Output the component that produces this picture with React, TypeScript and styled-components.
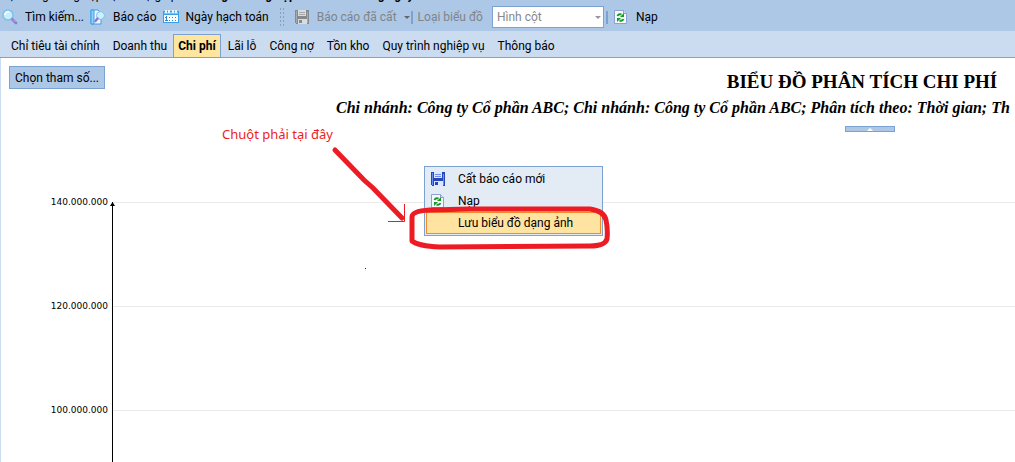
import React from "react";
import styled, { createGlobalStyle } from "styled-components";

const edge = "#7ba2d0";
const bar = "#adc7e6";
const pale = "#cbdbf0";
const red = "#ed1c24";

const Global = createGlobalStyle`
  *, *::before, *::after { box-sizing: border-box; }
  body { margin: 0; background: #fff; color: #000; font: 12px/16px Roboto, sans-serif; }
  button, select { font: inherit; color: inherit; margin: 0; }
`;

const Page = styled.div`
  position: relative;
  display: flex;
  flex-direction: column;
  height: 100vh;
  overflow: hidden;
`;

const MenuStrip = styled.nav`
  display: flex;
  align-items: flex-end;
  gap: 16px;
  height: 3px;
  overflow: hidden;
  background: ${bar};
  white-space: nowrap;
`;

const MenuTitle = styled.span<{ $strong?: boolean }>`
  flex: none;
  font-weight: ${p => (p.$strong ? 700 : 400)};
`;

const Toolbar = styled.div`
  display: flex;
  align-items: center;
  flex: none;
  height: 28px;
  padding-left: 2px;
  background: ${bar};
  white-space: nowrap;
`;

const ToolButton = styled.button<{ $tight?: boolean }>`
  display: flex;
  align-items: center;
  flex: none;
  gap: 7px;
  padding: 0 ${p => (p.$tight ? 1 : 6)}px 0 0;
  border: 0;
  background: none;
  &:disabled { color: #808488; }
`;

const Grip = styled.span`
  width: 6px;
  height: 21px;
  margin: 0 9px 0 4px;
  background: radial-gradient(circle, #8e9fb5 1px, transparent 1px) 0 0 / 3px 4px;
`;

const Divider = styled.span`
  width: 2px;
  height: 13px;
  margin-right: 5px;
  background: ${edge};
`;

const FieldLabel = styled.label`
  margin-right: 9px;
  color: #808488;
`;

const SelectBox = styled.span`
  position: relative;
  flex: none;
  width: 112px;
  margin-right: 2px;
  svg { position: absolute; right: 3px; top: 10px; }
`;

const Select = styled.select`
  display: block;
  appearance: none;
  width: 100%;
  height: 22px;
  padding: 0 4px;
  border: 1px solid ${edge};
  border-radius: 0;
  background: #fff;
  opacity: 1;
  &:disabled { color: #85888c; }
`;

const Tabs = styled.div`
  display: flex;
  align-items: flex-end;
  flex: none;
  height: 27px;
  padding-left: 4px;
  border-bottom: 1px solid ${edge};
  background: ${pale};
  white-space: nowrap;
`;

const Tab = styled.button<{ $active?: boolean }>`
  flex: none;
  height: 23px;
  padding: ${p => (p.$active ? "0 4px" : "0 6px 0 7px")};
  border: ${p => (p.$active ? `1px solid ${edge}` : "0")};
  border-bottom: 0;
  background: ${p => (p.$active ? "#ffe6a0" : "none")};
  font-weight: ${p => (p.$active ? 700 : 400)};
`;

const Content = styled.main`
  display: flex;
  flex-direction: column;
  flex: 1;
  min-height: 0;
  border-left: 1px solid ${pale};
`;

const Header = styled.header`
  display: grid;
  grid-template-columns: 335px 1fr;
  flex: none;
  height: 144px;
  padding-top: 8px;
  overflow: hidden;
`;

const ParamButton = styled.button`
  justify-self: start;
  align-self: start;
  height: 23px;
  margin-left: 8px;
  width: 96px;
  padding: 0;
  border: 1px solid ${edge};
  background: ${bar};
  white-space: nowrap;
`;

const Headings = styled.div`
  display: flex;
  flex-direction: column;
  width: 1068px;
  font-family: "Liberation Serif", serif;
  white-space: nowrap;
`;

const Title = styled.h1`
  margin: 4px 16px 0 0;
  text-align: center;
  font-size: 19px;
  line-height: 24px;
`;

const Subtitle = styled.h2`
  margin: 2px 0 6px;
  font-size: 16px;
  font-style: italic;
  line-height: 24px;
`;

const Collapse = styled.button`
  display: flex;
  align-items: center;
  justify-content: center;
  align-self: center;
  width: 50px;
  height: 6px;
  padding: 0;
  border: 1px solid ${edge};
  background: ${bar};
`;

const Chart = styled.section`
  display: grid;
  grid-template-columns: 107px 4px 1fr;
  flex: 1;
  min-height: 0;
`;

const Scale = styled.div`
  margin-top: -7px;
  text-align: right;
  font: 9px/14px "DejaVu Sans", sans-serif;
`;

const Tick = styled.div`
  height: 104px;
`;

const Plot = styled.div`
  grid-column: 3;
  border-left: 1px solid #000;
  overflow: hidden;
`;

const GridRow = styled.div`
  height: 104px;
  border-top: 1px solid #ebebeb;
`;

const ContextMenu = styled.div`
  position: absolute;
  left: 424px;
  top: 166px;
  width: 179px;
  padding: 1px;
  border: 1px solid ${edge};
  background: #e3ebf5;
`;

const MenuItem = styled.button<{ $active?: boolean }>`
  display: grid;
  grid-template-columns: 28px 1fr;
  align-items: center;
  width: 100%;
  height: 22px;
  padding: 0 3px;
  border: 1px solid ${p => (p.$active ? "#f58a2c" : "transparent")};
  background: ${p => (p.$active ? "#ffe3a0" : "none")};
  text-align: left;
  white-space: nowrap;
`;

const Note = styled.p`
  position: absolute;
  left: 222px;
  top: 125px;
  margin: 0;
  color: ${red};
  font: 13px/18px "Noto Sans", sans-serif;
  white-space: nowrap;
`;

const Marks = styled.svg`
  position: absolute;
  left: 0;
  top: 0;
  pointer-events: none;
`;

const SearchIcon = () => (
  <svg width="16" height="16" viewBox="0 0 16 16">
    <circle cx="6" cy="6" r="5" fill="#c9eefb" stroke="#79bfe9" strokeWidth="1.4" />
    <path d="M3 6a3 3 0 0 1 4-3" fill="none" stroke="#fff" strokeWidth="1.5" />
    <path d="M10.500 10.500l3.500 3.500" stroke="#8f76d0" strokeWidth="2.600" strokeLinecap="round" />
    <path d="M11 10.500l2.500 2.500" stroke="#c4b5ed" strokeWidth="1" />
  </svg>
);

const ReportIcon = () => (
  <svg width="16" height="16" viewBox="0 0 16 16">
    <path d="M1 1h7l3 3v11H1z" fill="#e9f7ff" stroke="#3f9fe8" />
    <path d="M1 1h3v14H1z" fill="#8fd0fa" stroke="#3f9fe8" />
    <circle cx="10.500" cy="6.500" r="4" fill="#cdeffc" stroke="#79bfe9" />
    <path d="M7.500 9.500l-2 2.500" stroke="#8f76d0" strokeWidth="2.400" strokeLinecap="round" />
  </svg>
);

const CalendarIcon = () => (
  <svg width="16" height="16" viewBox="0 0 16 16" shapeRendering="crispEdges">
    <path d="M0 2h16v12H0z" fill="#3b9fe6" />
    <path d="M1 6h14v7H1z" fill="#f3fbff" />
    <path d="M1 3h14v2H1z" fill="#7cc5f4" />
    <path d="M2 1h2v3H2zM5 1h2v3H5zM9 1h2v3H9zM12 1h2v3h-2z" fill="#e7f6ff" />
    <path d="M3 7h1v4H3zM2 8h1v1H2zM2 11h3v1H2z" fill="#3585c9" />
    <path d="M6 8h1v1H6zM9 8h1v1H9zM12 8h1v1h-1zM6 11h1v1H6zM9 11h1v1H9zM12 11h1v1h-1z" fill="#3585c9" />
  </svg>
);

const DiskIcon = ({ dark, mid, light }: { dark: string; mid: string; light: string }) => (
  <svg width="16" height="16" viewBox="0 0 16 16" shapeRendering="crispEdges">
    <path d="M1 1h14v14H2l-1-1z" fill={dark} />
    <path d="M2 2h1v12H2zM13 3h1v11h-1z" fill={mid} />
    <path d="M4 1h8v6H4z" fill={light} />
    <path d="M5 3h6v1H5zM5 5h6v1H5z" fill={mid} />
    <path d="M4 10h9v5H4z" fill={light} />
    <path d="M5 11h3v3H5z" fill={dark} />
  </svg>
);

const RefreshIcon = () => (
  <svg width="16" height="16" viewBox="0 0 16 16">
    <path d="M1.500 1.500h9l3 3v10h-12z" fill="#f5f8ff" stroke="#8f9fd0" />
    <path d="M10.500 1.500v3h3" fill="#d5def5" stroke="#8f9fd0" />
    <path d="M4.500 7q1-2.500 4-1.500" fill="none" stroke="#159b22" strokeWidth="2" />
    <path d="M11 4v4H7z" fill="#159b22" />
    <path d="M10.500 10q-1 2.500-4 1.500" fill="none" stroke="#159b22" strokeWidth="2" />
    <path d="M4 13V9h4z" fill="#159b22" />
  </svg>
);

const Caret = ({ color, width }: { color: string; width: number }) => (
  <svg width={width} height="3" viewBox="0 0 6 3"><path d="M0 0h6L3 3z" fill={color} /></svg>
);

const tabs = ["Chỉ tiêu tài chính", "Doanh thu", "Chi phí", "Lãi lỗ", "Công nợ", "Tồn kho", "Quy trình nghiệp vụ", "Thông báo"];
const ticks = ["140.000.000", "120.000.000", "100.000.000"];

export default function App() {
  return (
    <Page>
      <Global />
      <MenuStrip>
        <MenuTitle>Hệ thống</MenuTitle>
        <MenuTitle>Nghiệp vụ</MenuTitle>
        <MenuTitle>Trợ giúp</MenuTitle>
        <MenuTitle $strong>Thông tin tổng hợp</MenuTitle>
        <MenuTitle $strong>Báo cáo hàng ngày</MenuTitle>
      </MenuStrip>
      <Toolbar>
        <ToolButton><SearchIcon />Tìm kiếm...</ToolButton>
        <ToolButton><ReportIcon />Báo cáo</ToolButton>
        <ToolButton><CalendarIcon />Ngày hạch toán</ToolButton>
        <Grip />
        <ToolButton disabled $tight>
          <DiskIcon dark="#85888c" mid="#a5a8ac" light="#d9dcdf" />Báo cáo đã cất<Caret color="#62666c" width={6} />
        </ToolButton>
        <Divider />
        <FieldLabel htmlFor="chart-kind">Loại biểu đồ</FieldLabel>
        <SelectBox>
          <Select id="chart-kind" disabled><option>Hình cột</option></Select>
          <Caret color="#92969b" width={6} />
        </SelectBox>
        <Divider />
        <ToolButton><RefreshIcon />Nạp</ToolButton>
      </Toolbar>
      <Tabs role="tablist">
        {tabs.map(name => (
          <Tab key={name} role="tab" aria-selected={name === "Chi phí"} $active={name === "Chi phí"}>{name}</Tab>
        ))}
      </Tabs>
      <Content>
        <Header>
          <ParamButton>Chọn tham số...</ParamButton>
          <Headings>
            <Title>BIỂU ĐỒ PHÂN TÍCH CHI PHÍ</Title>
            <Subtitle>Chi nhánh: Công ty Cổ phần ABC; Chi nhánh: Công ty Cổ phần ABC; Phân tích theo: Thời gian; Th</Subtitle>
            <Collapse aria-label="Thu gọn">
              <svg width="6" height="3" viewBox="0 0 6 3"><path d="M0 3h6L3 0z" fill="#fff" /></svg>
            </Collapse>
          </Headings>
        </Header>
        <Chart>
          <Scale>{ticks.map(t => <Tick key={t}>{t}</Tick>)}</Scale>
          <Plot>{ticks.map(t => <GridRow key={t} />)}</Plot>
        </Chart>
      </Content>
      <ContextMenu role="menu">
        <MenuItem role="menuitem"><DiskIcon dark="#2446b8" mid="#6d8df0" light="#dbe7ff" />Cất báo cáo mới</MenuItem>
        <MenuItem role="menuitem"><RefreshIcon />Nạp</MenuItem>
        <MenuItem role="menuitem" $active><span />Lưu biểu đồ dạng ảnh</MenuItem>
      </ContextMenu>
      <Note>Chuột phải tại đây</Note>
      <Marks width="620" height="280" viewBox="0 0 620 280" fill="none" stroke={red}>
        <path d="M110 206l2.500-4 2.500 4z" fill="#000" stroke="none" />
        <path d="M335 150L364 180L373 188L402 218" strokeWidth="5" strokeLinecap="round" />
        <path d="M404.500 204V221.500H388" />
        <path d="M412 241V217Q412 211 430 210L470 209L590 209Q604 211 606 220Q608 229 607 239Q605 246 590 246L440 247Q418 246 412 241Z" strokeWidth="5" strokeLinejoin="round" />
        <path d="M365 268h1v1h-1z" fill="#500" stroke="none" />
      </Marks>
    </Page>
  );
}
